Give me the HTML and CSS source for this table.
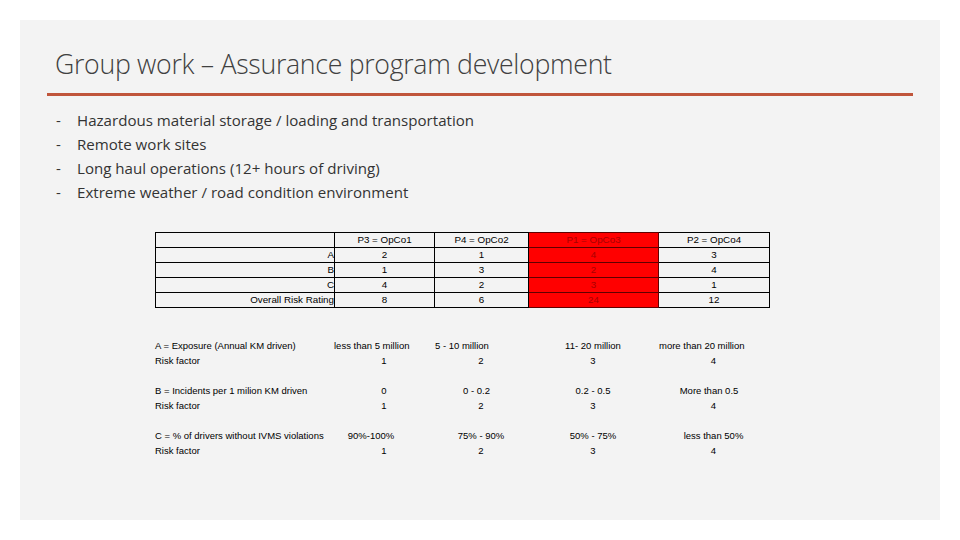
FILE: index.html
```html
<!DOCTYPE html>
<html>
<head>
<meta charset="utf-8">
<link rel="stylesheet" href="styles.css">
</head>
<body>
<div class="slide">
  <h1 class="title">Group work – Assurance program development</h1>
  <div class="rule"></div>
  <ul class="bullets">
    <li><span class="dash">-</span><span>Hazardous material storage / loading and transportation</span></li>
    <li><span class="dash">-</span><span>Remote work sites</span></li>
    <li><span class="dash">-</span><span>Long haul operations (12+ hours of driving)</span></li>
    <li><span class="dash">-</span><span>Extreme weather / road condition environment</span></li>
  </ul>
  <table class="risk">
    <colgroup>
      <col class="c0"><col class="c1"><col class="c2"><col class="c3"><col class="c4">
    </colgroup>
    <tr><td class="lab"></td><td>P3 = OpCo1</td><td>P4 = OpCo2</td><td class="red">P1 = OpCo3</td><td>P2 = OpCo4</td></tr>
    <tr><td class="lab">A</td><td>2</td><td>1</td><td class="red">4</td><td>3</td></tr>
    <tr><td class="lab">B</td><td>1</td><td>3</td><td class="red">2</td><td>4</td></tr>
    <tr><td class="lab">C</td><td>4</td><td>2</td><td class="red">3</td><td>1</td></tr>
    <tr><td class="lab">Overall Risk Rating</td><td>8</td><td>6</td><td class="red">24</td><td>12</td></tr>
  </table>
  <div class="legend">
    <div class="name">A = Exposure (Annual KM driven)</div><div class="left">less than 5 million</div><div class="left pad">5 - 10 million</div><div>11- 20 million</div><div class="left pad">more than 20 million</div>
    <div class="name">Risk factor</div><div>1</div><div>2</div><div>3</div><div>4</div>
    <div class="gap"></div>
    <div class="name">B = Incidents per 1 milion KM driven</div><div>0</div><div class="shift">0 - 0.2</div><div>0.2 - 0.5</div><div class="shift">More than 0.5</div>
    <div class="name">Risk factor</div><div>1</div><div>2</div><div>3</div><div>4</div>
    <div class="gap"></div>
    <div class="name">C = % of drivers without IVMS violations</div><div class="shift2">90%-100%</div><div>75% - 90%</div><div>50% - 75%</div><div>less than 50%</div>
    <div class="name">Risk factor</div><div>1</div><div>2</div><div>3</div><div>4</div>
  </div>
</div>
</body>
</html>
```
FILE: styles.css
```css
html, body {
  margin: 0;
  padding: 0;
  background: #ffffff;
}
.slide {
  margin: 20px;
  width: 920px;
  height: 500px;
  background: #f3f3f3;
  box-sizing: border-box;
  padding-top: 1px;
  overflow: hidden;
}
.title {
  margin: 26px 0 0 35px;
  font-family: "Open Sans", "Liberation Sans", sans-serif;
  font-weight: 300;
  font-size: 26.7px;
  line-height: 34px;
  color: #404040;
  letter-spacing: -0.3px;
}
.rule {
  margin: 12px 0 0 27px;
  width: 866px;
  height: 3px;
  background: #c0553b;
}
.bullets {
  list-style: none;
  margin: 12px 0 0 36px;
  padding: 0;
  font-family: "Open Sans", "Liberation Sans", sans-serif;
  font-size: 15.1px;
  line-height: 24px;
  color: #333333;
}
.bullets li {
  display: flex;
}
.dash {
  width: 21px;
}
.risk {
  margin: 28px 0 0 135px;
  border-collapse: collapse;
  table-layout: fixed;
  width: 614px;
  font-family: "Liberation Sans", sans-serif;
  font-size: 9.8px;
  color: #000;
}
.c0 { width: 179px; }
.c1 { width: 100px; }
.c2 { width: 94px; }
.c3 { width: 130px; }
.c4 { width: 111px; }
.risk td {
  border: 1px solid #000;
  height: 14px;
  padding: 0;
  text-align: center;
  line-height: 14px;
  white-space: nowrap;
}
.risk td.lab {
  text-align: right;
}
.risk td.red {
  background: #ff0000;
  color: #a80000;
  border-color: #600000;
}
.legend {
  margin: 30px 0 0 135px;
  display: grid;
  grid-template-columns: 179px 100px 94px 130px 111px;
  grid-auto-rows: 15px;
  font-family: "Liberation Sans", sans-serif;
  font-size: 9.5px;
  line-height: 15px;
  color: #000;
}
.legend > div {
  text-align: center;
  white-space: nowrap;
}
.legend > .name {
  text-align: left;
}
.legend > .left {
  text-align: left;
}
.legend > .pad {
  padding-left: 1px;
}
.legend > .shift {
  padding-right: 9px;
}
.legend > .shift2 {
  padding-right: 26px;
}
.legend > .gap {
  grid-column: 1 / -1;
}
```
